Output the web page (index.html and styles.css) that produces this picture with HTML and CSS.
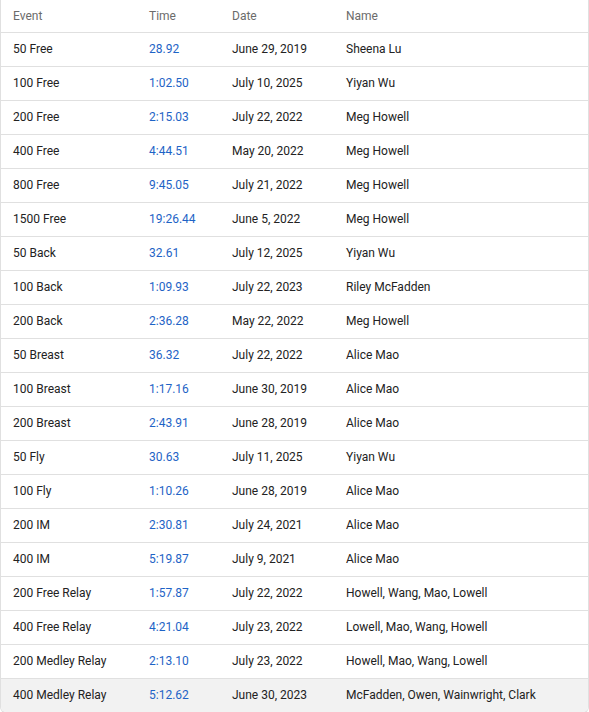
FILE: index.html
```html
<!DOCTYPE html>
<html>
<head>
<meta charset="utf-8">
<link rel="stylesheet" href="styles.css">
</head>
<body>
<div class="card">
<table class="records">
<colgroup><col class="c-event"><col class="c-time"><col class="c-date"><col class="c-name"></colgroup>
<thead>
<tr><th>Event</th><th>Time</th><th>Date</th><th>Name</th></tr>
</thead>
<tbody>
<tr><td>50 Free</td><td><a class="time">28.92</a></td><td>June 29, 2019</td><td>Sheena Lu</td></tr>
<tr><td>100 Free</td><td><a class="time">1:02.50</a></td><td>July 10, 2025</td><td>Yiyan Wu</td></tr>
<tr><td>200 Free</td><td><a class="time">2:15.03</a></td><td>July 22, 2022</td><td>Meg Howell</td></tr>
<tr><td>400 Free</td><td><a class="time">4:44.51</a></td><td>May 20, 2022</td><td>Meg Howell</td></tr>
<tr><td>800 Free</td><td><a class="time">9:45.05</a></td><td>July 21, 2022</td><td>Meg Howell</td></tr>
<tr><td>1500 Free</td><td><a class="time">19:26.44</a></td><td>June 5, 2022</td><td>Meg Howell</td></tr>
<tr><td>50 Back</td><td><a class="time">32.61</a></td><td>July 12, 2025</td><td>Yiyan Wu</td></tr>
<tr><td>100 Back</td><td><a class="time">1:09.93</a></td><td>July 22, 2023</td><td>Riley McFadden</td></tr>
<tr><td>200 Back</td><td><a class="time">2:36.28</a></td><td>May 22, 2022</td><td>Meg Howell</td></tr>
<tr><td>50 Breast</td><td><a class="time">36.32</a></td><td>July 22, 2022</td><td>Alice Mao</td></tr>
<tr><td>100 Breast</td><td><a class="time">1:17.16</a></td><td>June 30, 2019</td><td>Alice Mao</td></tr>
<tr><td>200 Breast</td><td><a class="time">2:43.91</a></td><td>June 28, 2019</td><td>Alice Mao</td></tr>
<tr><td>50 Fly</td><td><a class="time">30.63</a></td><td>July 11, 2025</td><td>Yiyan Wu</td></tr>
<tr><td>100 Fly</td><td><a class="time">1:10.26</a></td><td>June 28, 2019</td><td>Alice Mao</td></tr>
<tr><td>200 IM</td><td><a class="time">2:30.81</a></td><td>July 24, 2021</td><td>Alice Mao</td></tr>
<tr><td>400 IM</td><td><a class="time">5:19.87</a></td><td>July 9, 2021</td><td>Alice Mao</td></tr>
<tr><td>200 Free Relay</td><td><a class="time">1:57.87</a></td><td>July 22, 2022</td><td>Howell, Wang, Mao, Lowell</td></tr>
<tr><td>400 Free Relay</td><td><a class="time">4:21.04</a></td><td>July 23, 2022</td><td>Lowell, Mao, Wang, Howell</td></tr>
<tr><td>200 Medley Relay</td><td><a class="time">2:13.10</a></td><td>July 23, 2022</td><td>Howell, Mao, Wang, Lowell</td></tr>
<tr class="hover"><td>400 Medley Relay</td><td><a class="time">5:12.62</a></td><td>June 30, 2023</td><td>McFadden, Owen, Wainwright, Clark</td></tr>
</tbody>
</table>
</div>
</body>
</html>
```
FILE: styles.css
```css
html, body {
  margin: 0;
  padding: 0;
  background: #ffffff;
}
.card {
  width: 589px;
  box-sizing: border-box;
  border-left: 1px solid #e0e0e0;
  border-right: 1px solid #e0e0e0;
  border-bottom: 1px solid #e0e0e0;
  border-bottom-left-radius: 6px;
  border-bottom-right-radius: 6px;
  overflow: hidden;
}
.records {
  width: 100%;
  border-collapse: separate;
  border-spacing: 0;
  table-layout: fixed;
  font-family: Roboto, "Liberation Sans", sans-serif;
  font-size: 12px;
  color: #222222;
}
.c-event { width: 136px; }
.c-time { width: 83px; }
.c-date { width: 114px; }
.c-name { width: auto; }
.records th {
  text-align: left;
  font-weight: 400;
  color: #6b6b6b;
  line-height: 17px;
  padding: 8px 12px 7px 12px;
  border-bottom: 1px solid #e0e0e0;
}
.records td {
  line-height: 17px;
  padding: 8px 12px 8px 12px;
  border-bottom: 1px solid #e0e0e0;
  white-space: nowrap;
}
.records tbody tr:last-child td {
  border-bottom: none;
}
.records tr.hover td {
  background: #f2f2f2;
}
.time {
  color: #1e63c6;
  text-decoration: none;
}
```
